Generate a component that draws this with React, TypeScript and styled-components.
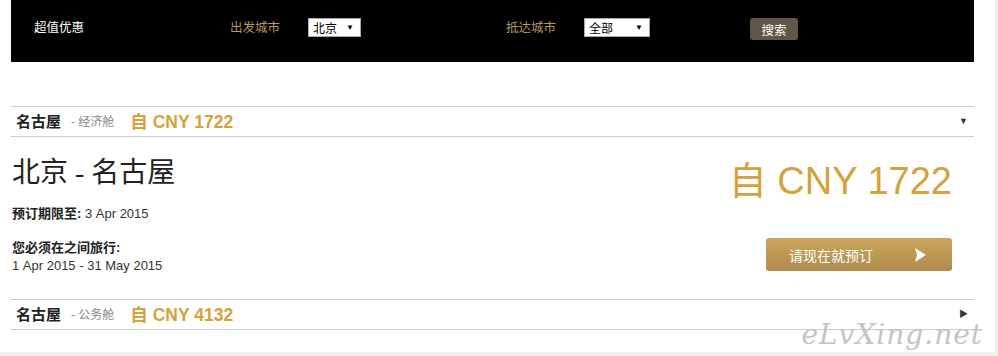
import styled, { createGlobalStyle } from "styled-components";

const GlobalStyle = createGlobalStyle`
    html, body {
        margin: 0;
        padding: 0;
        background: #efefef;
    }
    body {
        font-family: "Liberation Sans", "Noto Sans CJK SC", sans-serif;
        color: #333;
    }
`;

const Page = styled.div`
    position: relative;
    width: 995px;
    height: 352px;
    background: #fff;
    padding: 0 21px 0 11px;
    box-sizing: border-box;
    overflow: hidden;
`;

const SearchBar = styled.div`
    height: 62px;
    background: #000;
    display: flex;
    align-items: flex-start;
    padding: 18px 0 0 23px;
    box-sizing: border-box;
`;

const BarTitle = styled.div`
    width: 196px;
    color: #fff;
    font-size: 12.5px;
    line-height: 21px;
`;

const BarLabel = styled.div`
    width: 78px;
    color: #b59a62;
    font-size: 12.5px;
    line-height: 21px;
`;

const FakeSelect = styled.div<{ $w: number; $gap: number }>`
    width: ${(p) => p.$w}px;
    height: 19px;
    margin-right: ${(p) => p.$gap}px;
    box-sizing: border-box;
    background: #fff;
    border: 1px solid #a9a9a9;
    display: flex;
    align-items: center;
    justify-content: space-between;
    padding: 0 6px 0 4px;
    font-size: 12px;
    color: #000;
    span:last-child {
        font-size: 8px;
    }
`;

const SearchButton = styled.button`
    width: 48px;
    height: 22px;
    border: none;
    border-radius: 3px;
    background: #5f5646;
    color: #fff;
    font-family: inherit;
    font-size: 12.5px;
    padding: 0;
`;

const FareRow = styled.div<{ $top: number }>`
    margin-top: ${(p) => p.$top}px;
    height: 31px;
    box-sizing: border-box;
    border-top: 1px solid #ccc;
    border-bottom: 1px solid #ccc;
    display: flex;
    align-items: center;
    padding: 0 6px 2px 5px;
`;

const City = styled.span`
    font-weight: bold;
    font-size: 15px;
    color: #222;
`;

const Cabin = styled.span`
    margin-left: 10px;
    font-size: 12px;
    color: #888;
`;

const RowPrice = styled.span`
    margin-left: 16px;
    font-weight: bold;
    font-size: 17.5px;
    color: #d4a23a;
`;

const Toggle = styled.span`
    margin-left: auto;
    font-size: 9px;
    line-height: 10px;
    color: #333;
`;

const Detail = styled.div`
    display: flex;
    justify-content: space-between;
    padding: 18px 22px 0 1px;
    height: 162px;
    box-sizing: border-box;
`;

const Route = styled.h1`
    margin: 0 0 14px;
    font-family: "Liberation Serif", "Noto Sans CJK SC", serif;
    font-weight: normal;
    font-size: 28px;
    line-height: 36px;
    color: #222;
`;

const Info = styled.p`
    margin: 0 0 16px;
    font-size: 13px;
    line-height: 18px;
    color: #333;
    b {
        color: #222;
    }
`;

const Side = styled.div`
    display: flex;
    flex-direction: column;
    align-items: flex-end;
`;

const BigPrice = styled.div`
    font-size: 38px;
    line-height: 46px;
    padding-top: 3px;
    color: #d4a23a;
    margin-bottom: 34px;
`;

const BookButton = styled.button`
    width: 186px;
    height: 33px;
    border: none;
    border-radius: 3px;
    background: linear-gradient(#cba459, #ae8c4f);
    color: #fff;
    font-family: inherit;
    font-size: 14px;
    display: flex;
    align-items: center;
    padding: 0 26px 0 23px;
    justify-content: space-between;
`;

const Watermark = styled.div`
    position: absolute;
    right: 12px;
    bottom: 6px;
    font-family: "DejaVu Serif", serif;
    font-style: italic;
    font-size: 28px;
    line-height: 22px;
    letter-spacing: 1px;
    color: #c4c4c4;
`;

const App: React.FC = () => {
    return (
        <>
            <GlobalStyle />
            <Page>
                <SearchBar>
                    <BarTitle>超值优惠</BarTitle>
                    <BarLabel>出发城市</BarLabel>
                    <FakeSelect $w={53} $gap={145}>
                        <span>北京</span>
                        <span>▼</span>
                    </FakeSelect>
                    <BarLabel>抵达城市</BarLabel>
                    <FakeSelect $w={66} $gap={100}>
                        <span>全部</span>
                        <span>▼</span>
                    </FakeSelect>
                    <SearchButton>搜索</SearchButton>
                </SearchBar>

                <FareRow $top={44}>
                    <City>名古屋</City>
                    <Cabin>- 经济舱</Cabin>
                    <RowPrice>自 CNY 1722</RowPrice>
                    <Toggle>▼</Toggle>
                </FareRow>

                <Detail>
                    <div>
                        <Route>北京 - 名古屋</Route>
                        <Info>
                            <b>预订期限至:</b> 3 Apr 2015
                        </Info>
                        <Info>
                            <b>您必须在之间旅行:</b>
                            <br />1 Apr 2015 - 31 May 2015
                        </Info>
                    </div>
                    <Side>
                        <BigPrice>自 CNY 1722</BigPrice>
                        <BookButton>
                            <span>请现在就预订</span>
                            <svg width="12" height="14" viewBox="0 0 12 14">
                                <path d="M1 0 L12 7 L1 14 L3 7 Z" fill="#fff" />
                            </svg>
                        </BookButton>
                    </Side>
                </Detail>

                <FareRow $top={0}>
                    <City>名古屋</City>
                    <Cabin>- 公务舱</Cabin>
                    <RowPrice>自 CNY 4132</RowPrice>
                    <Toggle>▶</Toggle>
                </FareRow>

                <Watermark>eLvXing.net</Watermark>
            </Page>
        </>
    );
};

export default App;
